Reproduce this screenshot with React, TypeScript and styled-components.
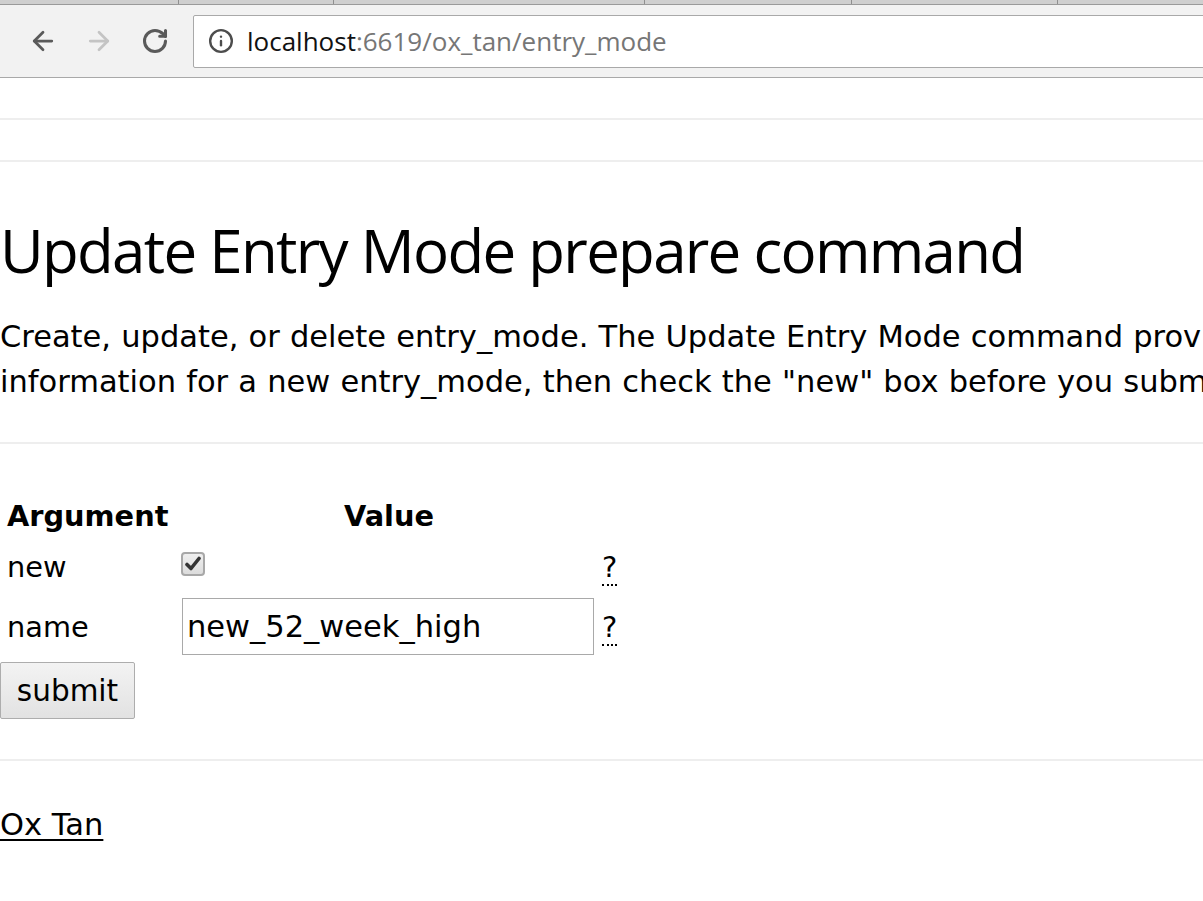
import styled, { createGlobalStyle } from "styled-components";
import { ArrowLeft, ArrowRight, RotateCw, Info } from "lucide-react";

const GlobalStyle = createGlobalStyle`
  html, body {
    margin: 0;
    padding: 0;
    background: #fff;
    overflow: hidden;
  }
  body {
    font-family: "DejaVu Sans", Verdana, sans-serif;
    font-size: 28.8px;
    color: #000;
  }
`;

const Window = styled.div`
  width: 1203px;
  height: 901px;
  overflow: hidden;
`;

const TabStrip = styled.div`
  height: 4px;
  background: #cfcfcf;
  border-bottom: 1px solid #9a9a9a;
  display: flex;
`;

const TabEdge = styled.span<{ $w: number }>`
  width: ${(p) => p.$w}px;
  border-right: 1px solid #8f8f8f;
  flex-shrink: 0;
`;

const Toolbar = styled.div`
  height: 73px;
  background: #f2f2f2;
  border-bottom: 1px solid #a9a9a9;
  display: flex;
  align-items: center;
  padding-left: 28px;
  box-sizing: border-box;
`;

const NavButton = styled.span<{ $dim?: boolean }>`
  width: 30px;
  height: 30px;
  display: flex;
  align-items: center;
  justify-content: center;
  color: ${(p) => (p.$dim ? "#c4c4c4" : "#5a5a5a")};
  margin-right: 26px;
`;

const AddressBar = styled.div`
  flex: 1;
  height: 53px;
  margin-left: -3px;
  margin-right: -20px;
  background: #fff;
  border: 1px solid #a9a9a9;
  border-radius: 2px;
  display: flex;
  align-items: center;
  padding-left: 14px;
  box-sizing: border-box;
  font-family: "Open Sans", "Noto Sans", sans-serif;
  font-size: 26px;
`;

const InfoIcon = styled.span`
  color: #4d4d4d;
  display: flex;
  margin-right: 13px;
`;

const Host = styled.span`
  color: #111;
`;

const Path = styled.span`
  color: #767676;
`;

const Page = styled.main`
  white-space: nowrap;
`;

const Rule = styled.hr<{ $top: number }>`
  border: 0;
  height: 2px;
  background: #eeeeee;
  margin: ${(p) => p.$top}px 0 0;
`;

const Title = styled.h1`
  font-family: "Open Sans", "Noto Sans", sans-serif;
  font-weight: 400;
  font-size: 60px;
  line-height: 76px;
  margin: 50px 0 26px;
  letter-spacing: -1.7px;
`;

const Intro = styled.p`
  margin: 0;
  font-size: 30.5px;
  line-height: 45px;
  word-spacing: 0.5px;
`;

const ArgTable = styled.table`
  border-spacing: 4px;
  margin: 45px 0 0 0;
`;

const HeadCell = styled.th<{ $center?: boolean }>`
  text-align: ${(p) => (p.$center ? "center" : "left")};
  font-weight: 700;
  padding: 3px;
  line-height: 40px;
  min-width: ${(p) => (p.$center ? "auto" : "167px")};
`;

const Cell = styled.td`
  padding: 3px;
  line-height: 42px;
  vertical-align: middle;
`;

const CheckBox = styled.span`
  display: inline-flex;
  align-items: center;
  justify-content: center;
  width: 24px;
  height: 24px;
  box-sizing: border-box;
  border: 2px solid #a8a8a8;
  border-radius: 4px;
  background: linear-gradient(#efefef, #dcdcdc);
  vertical-align: 5px;
  margin: -12px 0 0 -3px;
`;

const TextField = styled.input`
  width: 412px;
  height: 57px;
  box-sizing: border-box;
  border: 1px solid #a9a9a9;
  padding: 0 4px;
  margin: 0 0 0 -2px;
  font-family: "DejaVu Sans", Verdana, sans-serif;
  font-size: 30.5px;
  color: #000;
  outline: none;
`;

const Help = styled.abbr`
  text-decoration: none;
  border-bottom: 2px dotted #000;
  cursor: help;
  margin-left: -2px;
`;

const SubmitButton = styled.button`
  display: block;
  height: 57px;
  width: 135px;
  margin: 0;
  padding: 0;
  font-family: "DejaVu Sans", Verdana, sans-serif;
  font-size: 29.5px;
  color: #000;
  border: 1px solid #adadad;
  border-radius: 2px;
  background: linear-gradient(#f3f3f3, #e2e2e2);
`;

const FooterLink = styled.a`
  display: inline-block;
  margin-top: 46px;
  font-size: 30.5px;
  color: #000;
  text-decoration: underline;
  text-decoration-thickness: 2px;
  text-underline-offset: 4px;
`;

const Tick = () => (
  <svg width="16" height="16" viewBox="0 0 16 16">
    <path
      d="M2 8.5 L6 12.5 L14 2.5"
      fill="none"
      stroke="#333"
      strokeWidth="3.6"
      strokeLinecap="round"
      strokeLinejoin="round"
    />
  </svg>
);

const App = () => {
  return (
    <Window>
      <GlobalStyle />
      <TabStrip>
        <TabEdge $w={178} />
        <TabEdge $w={154} />
        <TabEdge $w={310} />
        <TabEdge $w={206} />
        <TabEdge $w={205} />
      </TabStrip>
      <Toolbar>
        <NavButton>
          <ArrowLeft size={30} strokeWidth={2.2} />
        </NavButton>
        <NavButton $dim>
          <ArrowRight size={30} strokeWidth={2.2} />
        </NavButton>
        <NavButton>
          <RotateCw size={28} strokeWidth={2.6} />
        </NavButton>
        <AddressBar>
          <InfoIcon>
            <Info size={26} strokeWidth={2.2} />
          </InfoIcon>
          <Host>localhost</Host>
          <Path>:6619/ox_tan/entry_mode</Path>
        </AddressBar>
      </Toolbar>
      <Page>
        <Rule $top={40} />
        <Rule $top={40} />
        <Title>Update Entry Mode prepare command</Title>
        <Intro>
          Create, update, or delete entry_mode. The Update Entry Mode command provides a form; to add one, enter
          <br />
          information for a new entry_mode, then check the "new" box before you submit.
        </Intro>
        <Rule $top={38} />
        <form>
          <ArgTable>
            <thead>
              <tr>
                <HeadCell>Argument</HeadCell>
                <HeadCell $center>Value</HeadCell>
                <HeadCell $center />
              </tr>
            </thead>
            <tbody>
              <tr>
                <Cell>new</Cell>
                <Cell>
                  <CheckBox>
                    <Tick />
                  </CheckBox>
                </Cell>
                <Cell>
                  <Help title="Check to create a new entry_mode">?</Help>
                </Cell>
              </tr>
              <tr>
                <Cell>name</Cell>
                <Cell>
                  <TextField defaultValue="new_52_week_high" />
                </Cell>
                <Cell>
                  <Help title="Name of the entry_mode">?</Help>
                </Cell>
              </tr>
            </tbody>
          </ArgTable>
          <SubmitButton type="button">submit</SubmitButton>
        </form>
        <Rule $top={40} />
        <FooterLink href="#">Ox Tan</FooterLink>
      </Page>
    </Window>
  );
};

export default App;
